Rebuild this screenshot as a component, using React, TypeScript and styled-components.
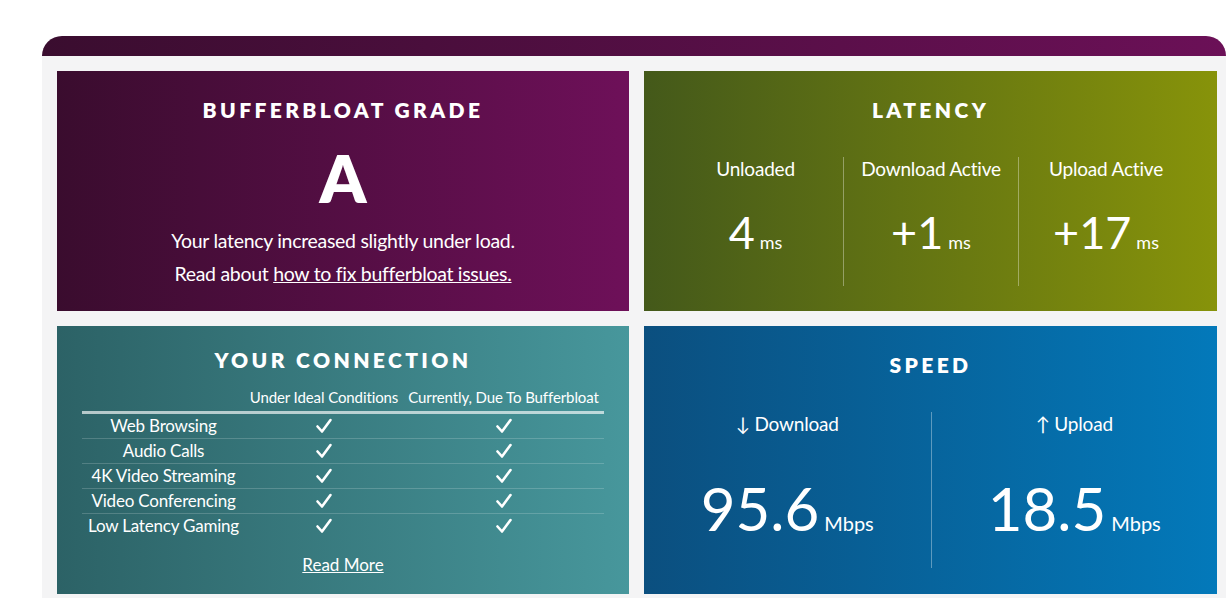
import styled, { createGlobalStyle } from "styled-components";

const GlobalStyle = createGlobalStyle`
  body {
    margin: 0;
    background: #ffffff;
    font-family: Lato, "Noto Sans", sans-serif;
  }
`;

const Page = styled.div`
  padding: 36px 0 0 42px;
  height: 562px;
  overflow: hidden;
`;

const Panel = styled.div`
  width: 1184px;
  border-radius: 20px 20px 0 0;
  overflow: hidden;
  background: #f4f4f5;
`;

const TopBar = styled.div`
  height: 20px;
  background: linear-gradient(to right, #3a0d2f, #6b1057);
`;

const Grid = styled.div`
  display: grid;
  grid-template-columns: 572px 573px;
  grid-template-rows: 240px 268px;
  gap: 15px;
  padding: 15px 9px 15px 15px;
`;

const Card = styled.section<{ $from: string; $to: string; $top: number }>`
  background: linear-gradient(to right, ${(p) => p.$from}, ${(p) => p.$to});
  color: #ffffff;
  text-align: center;
  padding-top: ${(p) => p.$top}px;
  display: flex;
  flex-direction: column;
  align-items: center;
  box-sizing: border-box;
`;

const Title = styled.h2`
  margin: 0;
  font-size: 21px;
  line-height: 24px;
  font-weight: 800;
  letter-spacing: 3.4px;
  text-transform: uppercase;
`;

const Grade = styled.div`
  font-size: 66px;
  font-weight: 800;
  line-height: 68px;
  margin-top: 22px;
`;

const Blurb = styled.p`
  margin: 12px 0 0;
  font-size: 19.5px;
  line-height: 33px;
  letter-spacing: -0.3px;
  & a {
    color: inherit;
  }
`;

const Columns = styled.div<{ $count: number; $height: number; $side: number }>`
  display: grid;
  grid-template-columns: repeat(${(p) => p.$count}, 1fr);
  align-self: stretch;
  padding: 0 ${(p) => p.$side}px;
  height: ${(p) => p.$height}px;
  margin-top: 35px;
`;

const Metric = styled.div<{ $gap: number }>`
  display: flex;
  flex-direction: column;
  align-items: center;
  gap: ${(p) => p.$gap}px;
  & + & {
    border-left: 1px solid rgba(255, 255, 255, 0.35);
  }
`;

const Label = styled.div`
  font-size: 19px;
  line-height: 24px;
  letter-spacing: -0.2px;
`;

const Value = styled.div<{ $size: number }>`
  font-size: ${(p) => p.$size}px;
  font-weight: 400;
  line-height: 1;
  white-space: nowrap;
`;

const Unit = styled.span<{ $size: number }>`
  font-size: ${(p) => p.$size}px;
  font-weight: 400;
  margin-left: 5px;
`;

const Table = styled.div`
  width: 522px;
  margin-top: 15px;
  display: grid;
  grid-template-columns: 163px 158px 201px;
`;

const HeadCell = styled.div`
  font-size: 15px;
  line-height: 20px;
  padding-bottom: 4px;
  letter-spacing: -0.1px;
  border-bottom: 3px solid rgba(255, 255, 255, 0.65);
  white-space: nowrap;
`;

const Cell = styled.div<{ $last?: boolean }>`
  height: 24px;
  font-size: 17px;
  line-height: 24px;
  letter-spacing: -0.2px;
  white-space: nowrap;
  display: flex;
  align-items: center;
  justify-content: center;
  border-bottom: ${(p) => (p.$last ? "none" : "1px solid rgba(255, 255, 255, 0.18)")};
`;

const MoreLink = styled.a`
  margin-top: 16px;
  font-size: 17px;
  color: #ffffff;
  text-decoration: underline;
`;

const Check = () => (
  <svg width="18" height="18" viewBox="0 0 18 18">
    <polyline
      points="2.5,9.5 7,14.5 15.5,3"
      fill="none"
      stroke="#ffffff"
      strokeWidth="2.6"
      strokeLinecap="round"
      strokeLinejoin="round"
    />
  </svg>
);

const uses = [
  "Web Browsing",
  "Audio Calls",
  "4K Video Streaming",
  "Video Conferencing",
  "Low Latency Gaming",
];

const latency = [
  { label: "Unloaded", value: "4" },
  { label: "Download Active", value: "+1" },
  { label: "Upload Active", value: "+17" },
];

const speed = [
  { label: "\u2193 Download", value: "95.6" },
  { label: "\u2191 Upload", value: "18.5" },
];

export default function App() {
  return (
    <>
      <GlobalStyle />
      <Page>
        <Panel>
          <TopBar />
          <Grid>
            <Card $from="#3a0c2e" $to="#6e1059" $top={27}>
              <Title>Bufferbloat Grade</Title>
              <Grade>A</Grade>
              <Blurb>
                Your latency increased slightly under load.
                <br />
                Read about <a href="#">how to fix bufferbloat issues.</a>
              </Blurb>
            </Card>

            <Card $from="#44591a" $to="#87930a" $top={27}>
              <Title>Latency</Title>
              <Columns $count={3} $height={129} $side={24}>
                {latency.map((m) => (
                  <Metric key={m.label} $gap={29}>
                    <Label>{m.label}</Label>
                    <Value $size={45}>
                      {m.value}
                      <Unit $size={18}>ms</Unit>
                    </Value>
                  </Metric>
                ))}
              </Columns>
            </Card>

            <Card $from="#2c6266" $to="#47979c" $top={22}>
              <Title>Your Connection</Title>
              <Table>
                <HeadCell />
                <HeadCell>Under Ideal Conditions</HeadCell>
                <HeadCell>Currently, Due To Bufferbloat</HeadCell>
                {uses.map((u, i) => {
                  const last = i === uses.length - 1;
                  return [
                    <Cell key={u} $last={last}>{u}</Cell>,
                    <Cell key={u + "-ideal"} $last={last}>
                      <Check />
                    </Cell>,
                    <Cell key={u + "-now"} $last={last}>
                      <Check />
                    </Cell>,
                  ];
                })}
              </Table>
              <MoreLink href="#">Read More</MoreLink>
            </Card>

            <Card $from="#0b4f7f" $to="#0379ba" $top={27}>
              <Title>Speed</Title>
              <Columns $count={2} $height={156} $side={0}>
                {speed.map((m) => (
                  <Metric key={m.label} $gap={42}>
                    <Label>{m.label}</Label>
                    <Value $size={60}>
                      {m.value}
                      <Unit $size={20}>Mbps</Unit>
                    </Value>
                  </Metric>
                ))}
              </Columns>
            </Card>
          </Grid>
        </Panel>
      </Page>
    </>
  );
}
